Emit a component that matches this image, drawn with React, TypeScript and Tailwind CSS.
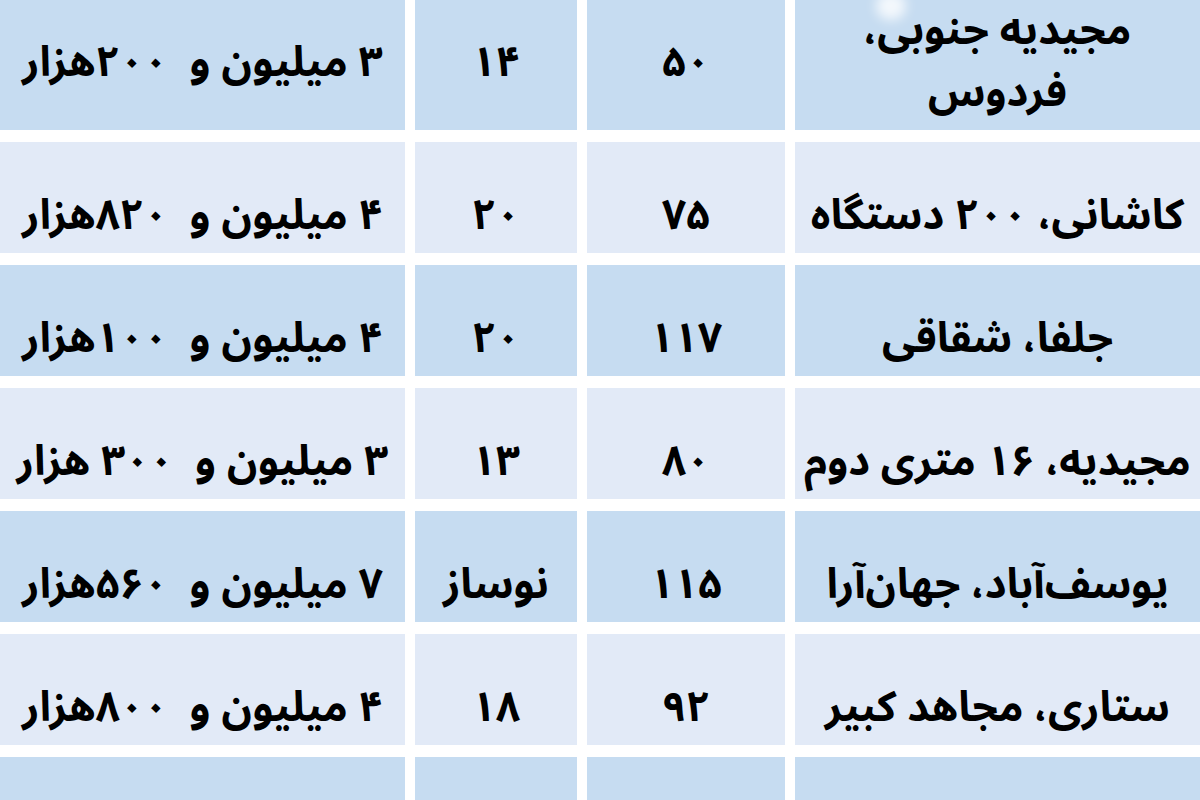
const rows = [
  { price: "۳ میلیون و  ۲۰۰هزار", age: "۱۴", area: "۵۰", place: ["مجیدیه جنوبی،", "فردوس"] },
  { price: "۴ میلیون و  ۸۲۰هزار", age: "۲۰", area: "۷۵", place: ["کاشانی، ۲۰۰ دستگاه"] },
  { price: "۴ میلیون و  ۱۰۰هزار", age: "۲۰", area: "۱۱۷", place: ["جلفا، شقاقی"] },
  { price: "۳ میلیون و  ۳۰۰ هزار", age: "۱۳", area: "۸۰", place: ["مجیدیه، ۱۶ متری دوم"] },
  { price: "۷ میلیون و  ۵۶۰هزار", age: "نوساز", area: "۱۱۵", place: ["یوسف‌آباد، جهان‌آرا"] },
  { price: "۴ میلیون و  ۸۰۰هزار", age: "۱۸", area: "۹۲", place: ["ستاری، مجاهد کبیر"] },
  { price: "", age: "", area: "", place: [""] },
];

export default function App() {
  return (
    <div className="relative h-[800px] w-[1200px] overflow-hidden bg-white font-['Noto_Sans_Arabic','Vazirmatn','DejaVu_Sans',sans-serif] text-[42px] font-bold text-black">
      <div className="flex flex-col gap-[12px]">
        {rows.map((row, i) => {
          const first = i === 0;
          const bg = i % 2 === 0 ? "bg-[#c6dcf1]" : "bg-[#e2eaf7]";
          const h = first ? "h-[130px]" : "h-[111px]";
          const pad = first ? "pb-[6px]" : "pt-[36px]";
          return (
            <div key={i} className={`grid grid-cols-[405px_162px_198px_405px] gap-[10px] ${h}`}>
              <div dir="rtl" className={`flex items-center justify-center whitespace-pre ${bg} ${pad}`}>
                {row.price}
              </div>
              <div dir="rtl" className={`flex items-center justify-center ${bg} ${pad}`}>
                {row.age}
              </div>
              <div dir="rtl" className={`flex items-center justify-center ${bg} ${pad}`}>
                {row.area}
              </div>
              <div dir="rtl" className={`flex flex-col items-center justify-center whitespace-nowrap leading-[62px] ${bg} ${pad}`}>
                {row.place.map((line, j) => (
                  <span key={j}>{line}</span>
                ))}
              </div>
            </div>
          );
        })}
      </div>
      {/* white smudge near the top */}
      <div className="absolute left-[876px] top-[-8px] h-[28px] w-[30px] rounded-full bg-white/80 blur-[6px]" />
    </div>
  );
}
